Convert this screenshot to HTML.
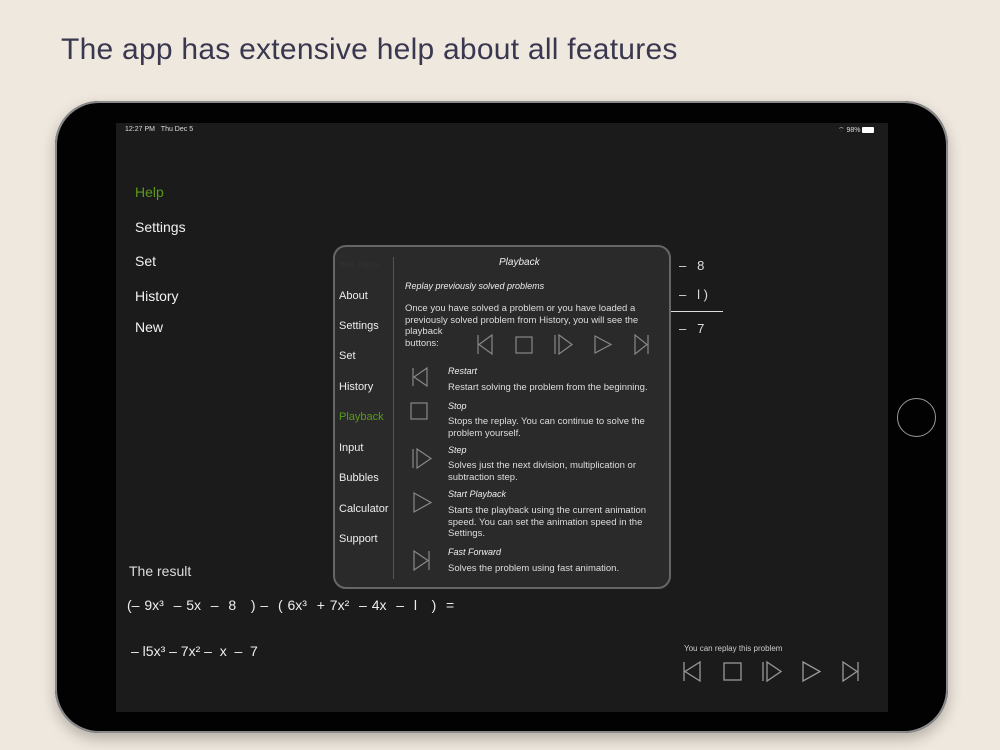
<!DOCTYPE html>
<html><head><meta charset="utf-8"><style>
*{margin:0;padding:0;box-sizing:border-box}
body{width:1000px;height:750px;background:#efe8de;position:relative;overflow:hidden;font-family:"Liberation Sans",sans-serif}
.t{position:absolute;left:61px;top:33px;font-size:30px;color:#3a3850;letter-spacing:0.25px;white-space:nowrap}
.dev{position:absolute;left:55px;top:101px;width:893px;height:632px;background:#020202;border-radius:44px;box-shadow:0 6px 14px rgba(0,0,0,.25),inset 0 0 0 2px #8a8a8a}
.scr{position:absolute;left:116px;top:123px;width:772px;height:589px;background:#1b1b1b;color:#eee}
.a{position:absolute;white-space:nowrap}
.home{position:absolute;left:842px;top:297px;width:39px;height:39px;border-radius:50%;border:1.5px solid #999}
.pop{position:absolute;left:333px;top:245px;width:338px;height:344px;background:#2a2a2a;border:2px solid #666;border-radius:13px}
.s{font-size:11px;color:#ddd}
.menu{font-size:14px;color:#f2f2f2}
.hm{font-size:11px;color:#eee}
i{font-style:italic}
</style></head><body>
<div class="t">The app has extensive help about all features</div>
<div class="dev"><div class="home"></div></div>
<div class="scr">
<div class="a" style="left:9px;top:3px;font-size:7px;color:#ddd">12:27 PM&nbsp;&nbsp;&nbsp;Thu Dec 5</div>
<div class="a" style="left:722px;top:3px;font-size:7px;color:#ddd">⌔ 98% <span style="display:inline-block;width:12px;height:6px;background:#fff;border-radius:1px;vertical-align:-1px"></span></div>
<div class="a menu" style="left:19px;top:61px;color:#5a9a1a">Help</div>
<div class="a menu" style="left:19px;top:96px">Settings</div>
<div class="a menu" style="left:19px;top:130px">Set</div>
<div class="a menu" style="left:19px;top:165px">History</div>
<div class="a menu" style="left:19px;top:196px">New</div>
<div class="a" style="left:563px;top:135px;font-size:13px;color:#ddd">–&nbsp;&nbsp;&nbsp;8</div>
<div class="a" style="left:563px;top:164px;font-size:13px;color:#ddd">–&nbsp;&nbsp;&nbsp;l )</div>
<div class="a" style="left:555px;top:188px;width:52px;height:1px;background:#ddd"></div>
<div class="a" style="left:563px;top:198px;font-size:13px;color:#ddd">–&nbsp;&nbsp;&nbsp;7</div>
<div class="a" style="left:13px;top:440px;font-size:14px;color:#ddd">The result</div>
<div class="a" style="left:11px;top:474px;font-size:14px;color:#eee;word-spacing:1px">(– 9x³ &nbsp;– 5x &nbsp;– &nbsp;8 &nbsp;&nbsp;) – &nbsp;( 6x³ &nbsp;+ 7x² &nbsp;– 4x &nbsp;– &nbsp;l &nbsp;&nbsp;) &nbsp;=</div>
<div class="a" style="left:15px;top:520px;font-size:14px;color:#eee">– l5x³ – 7x² – &nbsp;x &nbsp;– &nbsp;7</div>
<div class="a" style="left:568px;top:521px;font-size:8px;color:#ccc">You can replay this problem</div>
<svg class="a" style="left:560px;top:530px" width="200" height="30" fill="none" stroke="#999" stroke-width="1.3">
<path d="M8 9v19M24 9L9 18.5 24 28z"/>
<rect x="48" y="10" width="17" height="17"/>
<path d="M87 9v19M91 9l14 9.5L91 28z"/>
<path d="M127 9l17 9.5L127 28z"/>
<path d="M182 9v19M167 9l14 9.5L167 28z"/>
</svg>
</div>
<div class="pop">
<div class="a" style="left:58px;top:10px;width:1px;height:322px;background:#555"></div>
<div class="a" style="left:4px;top:13px;font-size:8px;color:#333">Help Topics</div>
<div class="a hm" style="left:4px;top:43px">About</div>
<div class="a hm" style="left:4px;top:73px">Settings</div>
<div class="a hm" style="left:4px;top:103px">Set</div>
<div class="a hm" style="left:4px;top:134px">History</div>
<div class="a hm" style="left:4px;top:164px;color:#5a9a1a">Playback</div>
<div class="a hm" style="left:4px;top:195px">Input</div>
<div class="a hm" style="left:4px;top:225px">Bubbles</div>
<div class="a hm" style="left:4px;top:256px">Calculator</div>
<div class="a hm" style="left:4px;top:286px">Support</div>
<div class="a" style="left:164px;top:10px;font-size:10px;color:#eee"><i>Playback</i></div>
<div class="a" style="left:70px;top:34px;font-size:9px;color:#eee"><i>Replay previously solved problems</i></div>
<div class="a s" style="left:70px;top:56px;font-size:9.5px;line-height:11.7px;white-space:normal;width:240px">Once you have solved a problem or you have loaded a previously solved problem from History, you will see the playback<br>buttons:</div>
<svg class="a" style="left:130px;top:85px" width="200" height="25" fill="none" stroke="#888" stroke-width="1.2">
<path d="M13 3v19M27 3L14 12.5 27 22z"/>
<rect x="51" y="5" width="16" height="16"/>
<path d="M90 3v19M94 3l13 9.5L94 22z"/>
<path d="M130 4l16 8.5L130 21z"/>
<path d="M183 3v19M170 3l12 9.5L170 22z"/>
</svg>
<svg class="a" style="left:70px;top:118px" width="30" height="210" fill="none" stroke="#888" stroke-width="1.2">
<path d="M8 3v18M22 3L9 12 22 21z"/>
<rect x="6" y="38" width="16" height="16"/>
<path d="M8 84v19M12 84l14 9.5L12 103z"/>
<path d="M9 128l17 9.5L9 147z"/>
<path d="M24 186v19M9 186l14 9.5L9 205z"/>
</svg>
<div class="a" style="left:113px;top:119px;font-size:9px;color:#eee"><i>Restart</i></div>
<div class="a s" style="left:113px;top:135px;font-size:9.5px">Restart solving the problem from the beginning.</div>
<div class="a" style="left:113px;top:154px;font-size:9px;color:#eee"><i>Stop</i></div>
<div class="a s" style="left:113px;top:169px;font-size:9.5px;line-height:11.7px">Stops the replay. You can continue to solve the<br>problem yourself.</div>
<div class="a" style="left:113px;top:198px;font-size:9px;color:#eee"><i>Step</i></div>
<div class="a s" style="left:113px;top:213px;font-size:9.5px;line-height:11.7px">Solves just the next division, multiplication or<br>subtraction step.</div>
<div class="a" style="left:113px;top:242px;font-size:9px;color:#eee"><i>Start Playback</i></div>
<div class="a s" style="left:113px;top:258px;font-size:9.5px;line-height:11.7px">Starts the playback using the current animation<br>speed. You can set the animation speed in the<br>Settings.</div>
<div class="a" style="left:113px;top:300px;font-size:9px;color:#eee"><i>Fast Forward</i></div>
<div class="a s" style="left:113px;top:316px;font-size:9.5px">Solves the problem using fast animation.</div>
</div>
</body></html>
